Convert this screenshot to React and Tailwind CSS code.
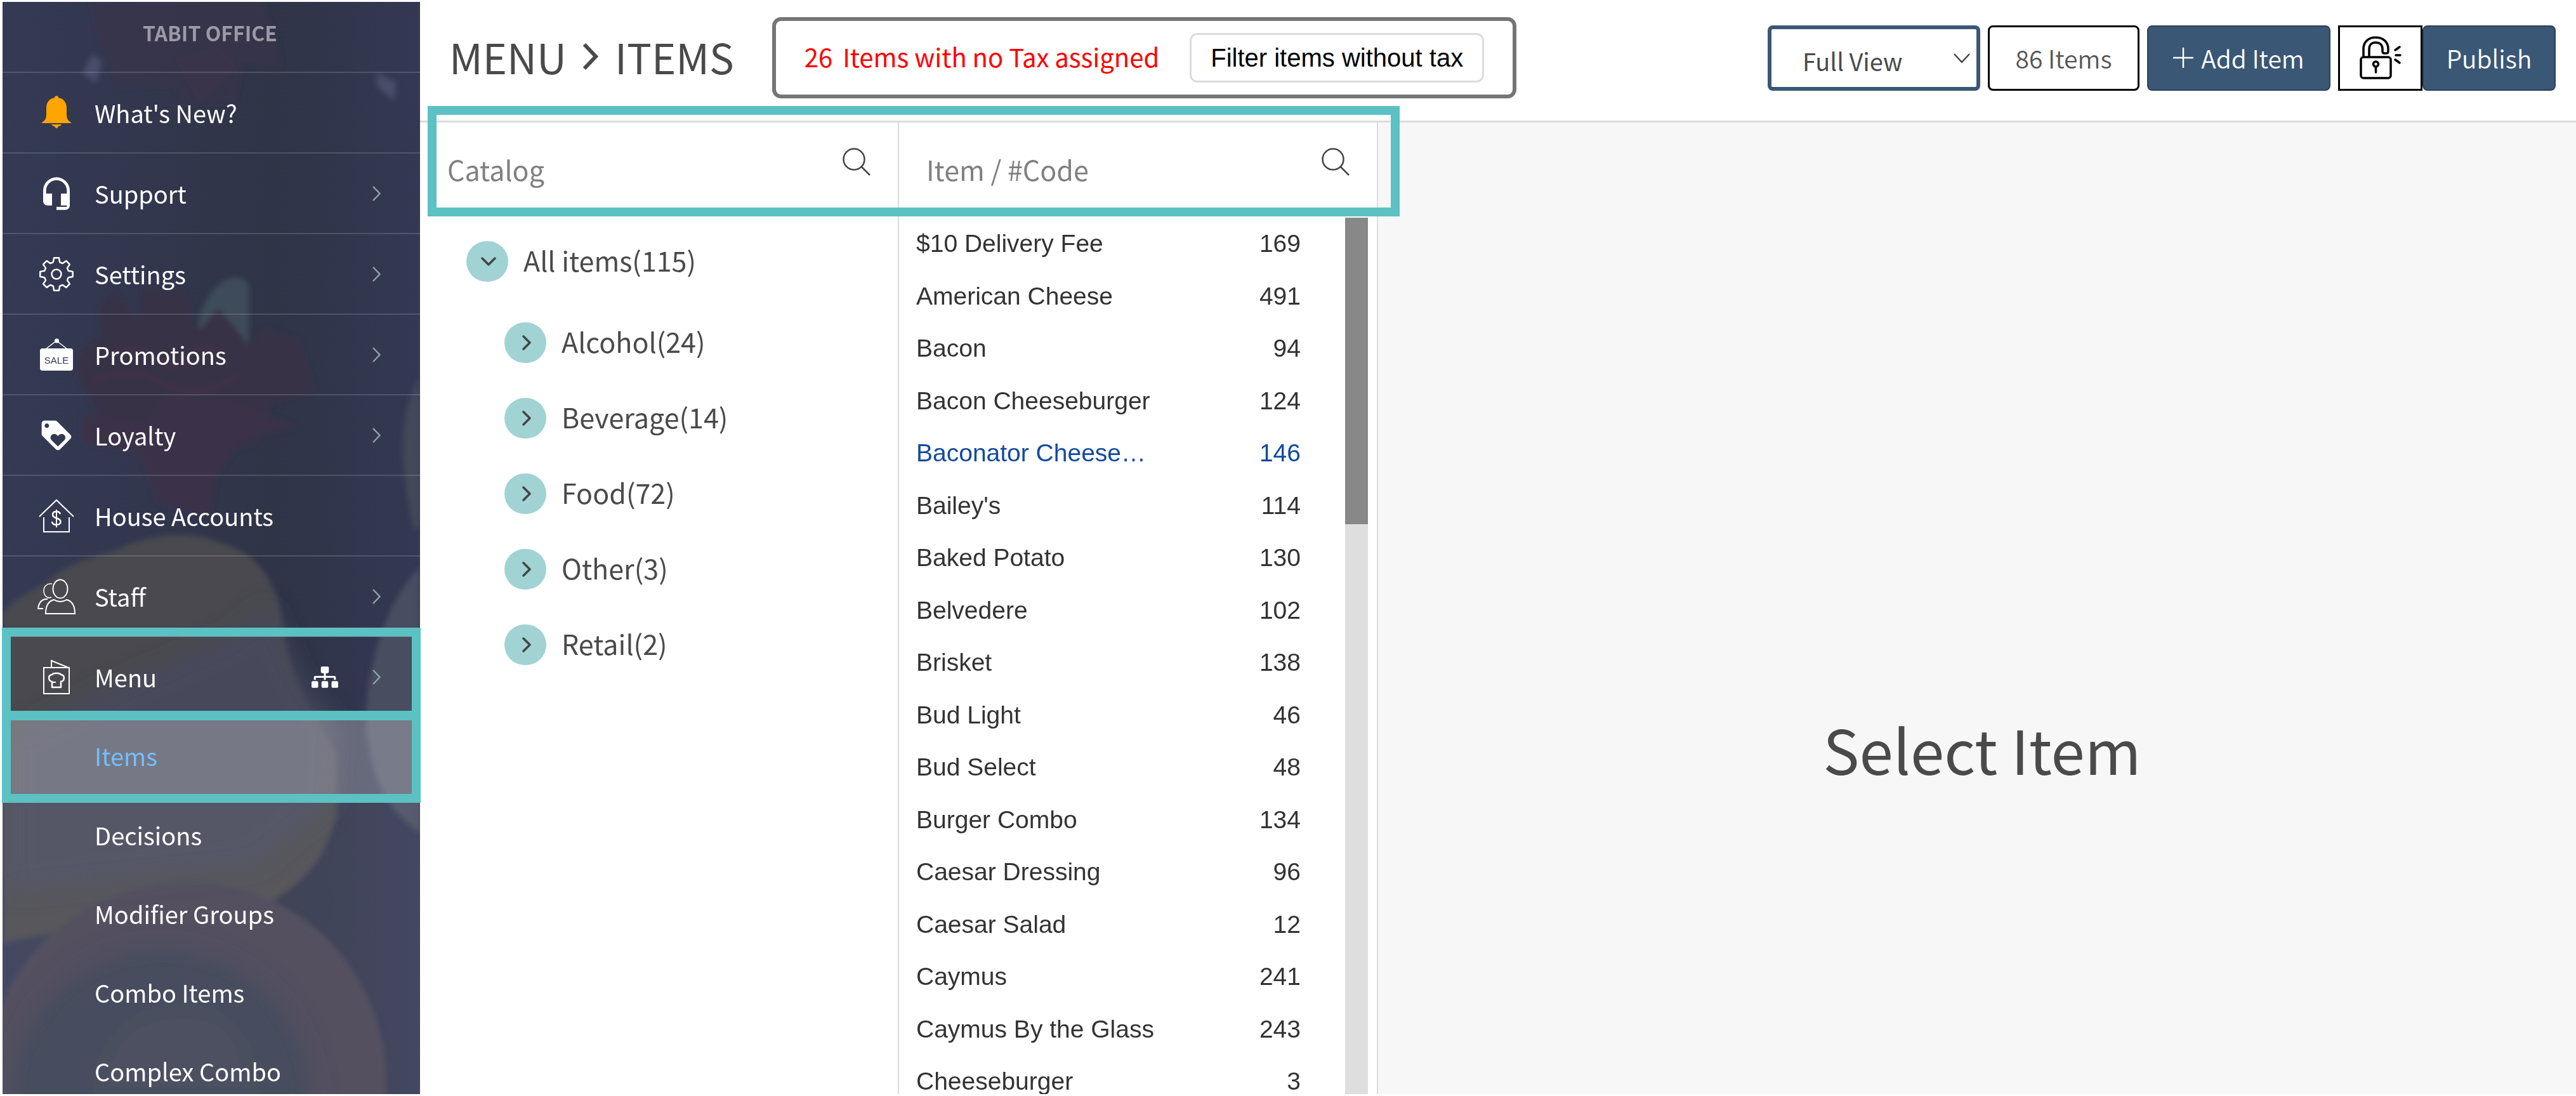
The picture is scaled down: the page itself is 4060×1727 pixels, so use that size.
import React, { useState } from "react";
import { MdHeadsetMic, MdLoyalty } from "react-icons/md";
import { FaSitemap } from "react-icons/fa";

const navItems = [
  { label: "What's New?", icon: BellIcon, arrow: false },
  { label: "Support", icon: SupportIcon, arrow: true },
  { label: "Settings", icon: GearIcon, arrow: true },
  { label: "Promotions", icon: SaleIcon, arrow: true },
  { label: "Loyalty", icon: LoyaltyIcon, arrow: true },
  { label: "House Accounts", icon: HouseIcon, arrow: false },
  { label: "Staff", icon: StaffIcon, arrow: true },
];

const subItems = ["Decisions", "Modifier Groups", "Combo Items", "Complex Combo"];

const categories = [
  { name: "Alcohol", count: 24 },
  { name: "Beverage", count: 14 },
  { name: "Food", count: 72 },
  { name: "Other", count: 3 },
  { name: "Retail", count: 2 },
];

const menuItems = [
  { name: "$10 Delivery Fee", code: 169 },
  { name: "American Cheese", code: 491 },
  { name: "Bacon", code: 94 },
  { name: "Bacon Cheeseburger", code: 124 },
  { name: "Baconator Cheese…", code: 146, active: true },
  { name: "Bailey's", code: 114 },
  { name: "Baked Potato", code: 130 },
  { name: "Belvedere", code: 102 },
  { name: "Brisket", code: 138 },
  { name: "Bud Light", code: 46 },
  { name: "Bud Select", code: 48 },
  { name: "Burger Combo", code: 134 },
  { name: "Caesar Dressing", code: 96 },
  { name: "Caesar Salad", code: 12 },
  { name: "Caymus", code: 241 },
  { name: "Caymus By the Glass", code: 243 },
  { name: "Cheeseburger", code: 3 },
];

function BellIcon() {
  return (
    <svg width="46" height="54" viewBox="0 0 46 54" fill="#ffa500">
      <path d="M23 0c2 0 3 1 3 3 8 1.500 13 7 13 16v10c0 7 2 10 7 13v1H0v-1c5-3 7-6 7-13V19C7 10 12 4.500 20 3c0-2 1-3 3-3z" />
      <path d="M15 45h16c-1 2-3 3-5 3-.5 1.500-1.500 3-3 3s-2.500-1.500-3-3c-2 0-4-1-5-3z" />
    </svg>
  );
}

function SupportIcon() {
  return <MdHeadsetMic size={56} />;
}

function LoyaltyIcon() {
  return <MdLoyalty size={56} />;
}

function GearIcon() {
  // eight teeth, each one narrower at the tip than at the root
  const points = [];
  for (let i = 0; i < 8; i++) {
    const mid = (i * Math.PI) / 4;
    [[-0.27, 19.5], [-0.15, 26], [0.15, 26], [0.27, 19.5]].forEach(([da, r]) => {
      points.push(`${(28 + r * Math.sin(mid + da)).toFixed(1)},${(28 - r * Math.cos(mid + da)).toFixed(1)}`);
    });
  }
  return (
    <svg width="56" height="56" viewBox="0 0 56 56" fill="none" stroke="#fff" strokeWidth="2.500" strokeLinejoin="round">
      <polygon points={points.join(" ")} />
      <circle cx="28" cy="28" r="7.500" />
    </svg>
  );
}

function SaleIcon() {
  return (
    <svg width="52" height="52" viewBox="0 0 52 52">
      <path d="M9 17 26 4l17 13" fill="none" stroke="#fff" strokeWidth="1.500" />
      <circle cx="26.500" cy="4" r="3.500" fill="#fff" />
      <rect x="0" y="16" width="52" height="35" rx="4" fill="#fff" />
      <text x="26" y="40" textAnchor="middle" fontSize="15" fontFamily="Liberation Sans, sans-serif" fill="#343850">SALE</text>
    </svg>
  );
}

function HouseIcon() {
  return (
    <svg width="56" height="56" viewBox="0 0 56 56" fill="none" stroke="#fff" strokeWidth="2">
      <path d="M1 29 28 3l27 26" />
      <path d="M8 30v23h40V30" />
      <path d="M34 25c-1-3-3-4-6-4-4 0-6 2-6 5 0 7 12.500 4 12.500 11 0 3-2.500 5-6.500 5s-6.500-2-7-5" strokeWidth="2.500" />
      <path d="M28 18v28" />
    </svg>
  );
}

function StaffIcon() {
  return (
    <svg width="60" height="56" viewBox="0 0 60 56" fill="none" stroke="#fff" strokeWidth="2">
      <ellipse cx="36" cy="16" rx="11.500" ry="14.500" />
      <path d="M13 55c0-13 5-20 13-22 3 2 6 3 10 3s7-1 10-3c8 2 13 9 13 22z" />
      <path d="M23 8c-8-1-13 4-13 11 0 4 2 8 5 10 2 1 5 1 7 0" strokeWidth="1.500" />
      <path d="M16 32c-9-1-14 6-15 15h8" />
    </svg>
  );
}

function MenuIcon() {
  return (
    <svg width="42" height="56" viewBox="0 0 42 56" fill="none" stroke="#fff" strokeWidth="2">
      <path d="M1 13h40v41H1z" />
      <path d="M13 13V2l27 11" />
      <path d="M14 44V35c-6-1-7-10 0-11 2-3 12-3 14 0 7 1 6 10 0 11v9z" strokeWidth="2.500" strokeLinejoin="round" />
      <path d="M15 36h5" />
    </svg>
  );
}

function Arrow() {
  return (
    <svg width="13" height="24" viewBox="0 0 13 24" fill="none" stroke="#8fa3a3" strokeWidth="2.500">
      <path d="m1 1 10.500 11L1 23" />
    </svg>
  );
}

function SearchIcon() {
  return (
    <svg className="mb-[22px]" width="44" height="44" viewBox="0 0 44 44" fill="none" stroke="#444" strokeWidth="2.500">
      <circle cx="18" cy="18" r="16.500" />
      <path d="m30 30 13 13" />
    </svg>
  );
}

function LockIcon() {
  return (
    <svg width="66" height="68" viewBox="0 0 66 68" fill="none" stroke="#000" strokeWidth="3.500" strokeLinecap="round" strokeLinejoin="round">
      <rect x="2" y="33" width="47" height="33" rx="4" />
      <path d="M6 32V20C6 9 14 2 25 2c12 0 20 7 20 18v4c0 2-1 3-3 3h-3c-2 0-3-1-3-3v-4c0-6-4-10-11-10-6 0-10 4-10 10v12" />
      <circle cx="25.500" cy="44" r="4" />
      <path d="M25.500 49v8M56 22l7-5M57 30h7M56 37l7 5" />
    </svg>
  );
}

// Dimmed table photo behind the navigation
function SidebarBackdrop() {
  return (
    <svg className="absolute inset-0 w-full h-full" viewBox="0 0 658 1721" preserveAspectRatio="xMidYMin slice" aria-hidden="true">
      <defs>
        <linearGradient id="shade" x1="0" x2="1" y1="0" y2="0">
          <stop offset="0" stopColor="#353a55" />
          <stop offset="0.650" stopColor="#2f3447" />
          <stop offset="1" stopColor="#343853" />
        </linearGradient>
        <filter id="soft" x="-10%" y="-10%" width="120%" height="120%">
          <feGaussianBlur stdDeviation="4" />
        </filter>
        <filter id="softer" x="-10%" y="-10%" width="120%" height="120%">
          <feGaussianBlur stdDeviation="18" />
        </filter>
      </defs>
      <rect width="658" height="1721" fill="url(#shade)" />
      <g filter="url(#soft)">
        {/* Flowers */}
        <path d="M140 0h270l22 60 8 44-60-8-14 60-70 10-30-36-80 4-30-60z" fill="#37324a" opacity="0.800" />
        <path d="M270 90l70-20 30 30-60 60z" fill="#3e364a" opacity="0.600" />
        <path d="M126 112l16-30 14 12-8 34z" fill="#4a4e69" />
        <path d="M590 112l30 14-2 30-28-22z" fill="#4a4e69" />
        <path d="M310 500c10-40 30-60 54-66 14 0 24 6 24 16v100l-80 10z" fill="#3e4b5a" />
        <path d="M118 590c-4-40 20-60 40-60l-6-40 20-36 40 44 12-46 60 2 26 64 30-36 50 60 24-30 54 22 24 76-70 24-20 60-120 40-110-50z" fill="#373047" />
        <path d="M170 560q36-26 70 0t60-4 50 20M140 600q60-30 110 0t120-10" fill="none" stroke="#443549" strokeWidth="5" />
        <path d="M126 650l100 10 30-40 110 10 100 40-90 20-40 60-10 60-80-20-30-80-90-16z" fill="#3b3348" />
        {/* Stones */}
        <path d="M0 965c10-20 40-34 70-50 40-40 90-40 130-60 60-22 110-18 150 0 50 14 70 50 86 90 8 60 14 110 50 170l40 70v100c-20 70-60 130-190 168-120 10-210 0-336 30z" fill="#4a4a50" />
        <path d="M658 890c-60 60-90 180-84 260 10 80 30 120 84 160z" fill="#494d60" />
        <path d="M658 590c-34 60-34 130-10 240h10z" fill="#434858" />
        {/* Sliced fig */}
        <circle cx="290" cy="1700" r="314" fill="#464353" />
      </g>
      <g filter="url(#softer)">
        <path d="M360 1000l60-50 46 110 60 80-6 120-120 100-390 40v-240l120-60z" fill="#484b5e" opacity="0.800" />
        <circle cx="250" cy="1730" r="240" fill="#393c51" />
        <path d="M150 1721c10-100 70-140 160-130 60 10 80 60 80 130z" fill="#3e4553" opacity="0.700" />
      </g>
    </svg>
  );
}

function TreeToggle({ open, onClick, label }) {
  return (
    <button type="button" aria-label={label} aria-expanded={open} onClick={onClick} className="w-[66px] h-[64px] rounded-full bg-[#a1d2d4] flex items-center justify-center pl-1">
      <svg width="24" height="24" viewBox="0 0 24 24" fill="none" stroke="#444" strokeWidth="3.500" strokeLinecap="round" strokeLinejoin="round">
        <path d={open ? "m2 7 10 10L22 7" : "m7 2 10 10L7 22"} />
      </svg>
    </button>
  );
}

function Sidebar() {
  return (
    <nav className="relative w-[658px] shrink-0 text-white text-[38px]">
      <div className="absolute inset-0 overflow-hidden">
        <SidebarBackdrop />
      </div>
      <div className="relative h-full flex flex-col">
        <div className="h-[112px] shrink-0 flex justify-center pt-6 pr-1 border-b-2 border-white/15 text-[32px] leading-[48px] font-bold text-[#9c99a5]">
          TABIT OFFICE
        </div>
        {navItems.map(({ label, icon: Icon, arrow }) => (
          <a key={label} href="#" className="h-[127px] shrink-0 flex items-center pr-[62px] border-b-2 border-white/15">
            <span className="w-[145px] pl-6 flex justify-center">
              <Icon />
            </span>
            <span className="flex-1">{label}</span>
            {arrow && <Arrow />}
          </a>
        ))}
        <a href="#" className="relative h-[125px] shrink-0 flex items-center pr-[62px]">
          <span className="w-[145px] pl-6 flex justify-center">
            <MenuIcon />
          </span>
          <span className="flex-1">Menu</span>
          <FaSitemap size={42} className="mr-[54px]" />
          <Arrow />
          <span className="absolute -inset-x-px -top-[15px] -bottom-[5px] border-[14px] border-[#5bc1c3]" />
        </a>
        <div className="flex-1 bg-white/8">
          <a href="#" className="relative h-[126px] flex items-center pl-[145px] pb-1 bg-white/20 text-[#74bffb]">
            Items
            <span className="absolute -inset-x-px -top-[8px] -bottom-[10px] border-[14px] border-[#5bc1c3]" />
          </a>
          {subItems.map((label) => (
            <a key={label} href="#" className="h-[124px] flex items-center pl-[145px] pb-1">
              {label}
            </a>
          ))}
        </div>
      </div>
    </nav>
  );
}

function Header() {
  return (
    <header className="h-[190px] shrink-0 flex items-center pl-[46px] pr-8 pb-[11px] border-b-[3px] border-[#dcdcdc]">
      <h1 className="flex items-center gap-6 pb-1 text-[65px] leading-[80px] text-[#4a4a4a]">
        MENU
        <svg width="28" height="44" viewBox="0 0 28 44" fill="none" stroke="#4a4a4a" strokeWidth="6">
          <path d="m4 3 18 19L4 41" />
        </svg>
        ITEMS
      </h1>
      <div className="ml-[60px] h-[128px] flex items-center gap-12 px-[45px] border-[6px] border-[#757575] rounded-[14px]">
        <p className="pb-1 text-[40px] text-[#ff0000]">
          <span className="mr-4">26</span>
          Items with no Tax assigned
        </p>
        <button type="button" className="h-[78px] px-[30px] border-[3px] border-[#dcdcdc] rounded-xl font-['Liberation_Sans',Arial,sans-serif] text-[40px] text-black">
          Filter items without tax
        </button>
      </div>
      <div className="ml-auto flex items-center gap-3 text-[39px] font-[350] text-[#555]">
        <div className="relative">
          <select aria-label="View" className="appearance-none w-[335px] h-[103px] pl-[49px] pt-2 border-[6px] border-[#3a5775] rounded-lg bg-white text-[38px] font-normal text-[#4a4a4a]">
            <option>Full View</option>
          </select>
          <svg className="absolute right-[16px] top-[44px] pointer-events-none" width="26" height="16" viewBox="0 0 26 16" fill="none" stroke="#444" strokeWidth="2.500">
            <path d="m1 1 12 13L25 1" />
          </svg>
        </div>
        <button type="button" className="w-[239px] h-[103px] border-[3px] border-black rounded-lg">86 Items</button>
        <button type="button" className="w-[289px] h-[103px] flex items-center justify-center gap-3 border-2 border-[#2c4058] rounded-lg bg-[#3a5775] text-white">
          <svg width="32" height="32" viewBox="0 0 32 32" stroke="#fff" strokeWidth="2.500">
            <path d="M16 0v32M0 16h32" />
          </svg>
          Add Item
        </button>
        <div className="flex">
          <button type="button" aria-label="Unlock" className="w-[133px] h-[103px] flex items-center justify-center border-[3px] border-black">
            <LockIcon />
          </button>
          <button type="button" className="w-[210px] h-[103px] border-2 border-[#2c4058] rounded-lg bg-[#3a5775] text-white">Publish</button>
        </div>
      </div>
    </header>
  );
}

export default function App() {
  const [open, setOpen] = useState(true);

  return (
    <div className="h-screen overflow-hidden flex pl-1 py-[3px] bg-white font-['Noto_Sans_CJK_SC',sans-serif]">
      <Sidebar />
      <main className="flex-1 min-w-0 flex flex-col">
        <Header />
        <div className="relative flex-1 min-h-0 flex">
          {/* Catalog */}
          <section className="w-[755px] shrink-0 border-r-2 border-[#dcdcdc] text-[#4a4a4a]">
            <div className="h-[150px] flex items-center pl-[43px] pr-[43px] pb-1">
              <input type="text" aria-label="Catalog" placeholder="Catalog" className="flex-1 min-w-0 text-[43px] placeholder:text-[#808080]" />
              <SearchIcon />
            </div>
            <div className="pl-[73px] text-[43px]">
              <div className="h-[137px] flex items-center gap-6">
                <TreeToggle open={open} onClick={() => setOpen(!open)} label="All items" />
                <span className="pb-1">All items(115)</span>
              </div>
              {open && (
                <ul className="pl-[60px]">
                  {categories.map((cat) => (
                    <li key={cat.name} className="h-[119px] flex items-center gap-6">
                      <TreeToggle open={false} label={cat.name} />
                      <span className="pb-1">{cat.name}({cat.count})</span>
                    </li>
                  ))}
                </ul>
              )}
            </div>
          </section>

          {/* Items */}
          <section className="w-[755px] shrink-0 flex flex-col border-r-2 border-[#dcdcdc]">
            <div className="h-[150px] shrink-0 flex items-center pl-[43px] pr-[43px] pb-1">
              <input type="text" aria-label="Item or code" placeholder="Item / #Code" className="flex-1 min-w-0 text-[43px] placeholder:text-[#808080]" />
              <SearchIcon />
            </div>
            <div className="flex-1 min-h-0 flex overflow-hidden">
              <div className="flex-1 pl-[27px] pr-[70px]">
                <table className="w-full h-[1403px] font-['Liberation_Sans',Arial,sans-serif] text-[39px] text-[#333]">
                  <tbody>
                    {menuItems.map((item) => (
                      <tr key={item.name} className={item.active ? "text-[#134a9e]" : ""}>
                        <td className="p-0">{item.name}</td>
                        <td className="p-0 text-right">{item.code}</td>
                      </tr>
                    ))}
                  </tbody>
                </table>
              </div>
              <div className="w-[36px] mr-[14px] bg-[#dedede]" aria-hidden="true">
                <div className="h-[35%] bg-[#888]"></div>
              </div>
            </div>
          </section>

          {/* Details */}
          <section className="flex-1 bg-[#f7f7f7] flex justify-center pt-[917px] pl-4">
            <h2 className="text-[96px] leading-[140px] text-[#4a4a4a]">Select Item</h2>
          </section>

          <div className="absolute left-[12px] -top-[26px] w-[1532px] h-[174px] border-[14px] border-[#5bc1c3] pointer-events-none"></div>
        </div>
      </main>
    </div>
  );
}
